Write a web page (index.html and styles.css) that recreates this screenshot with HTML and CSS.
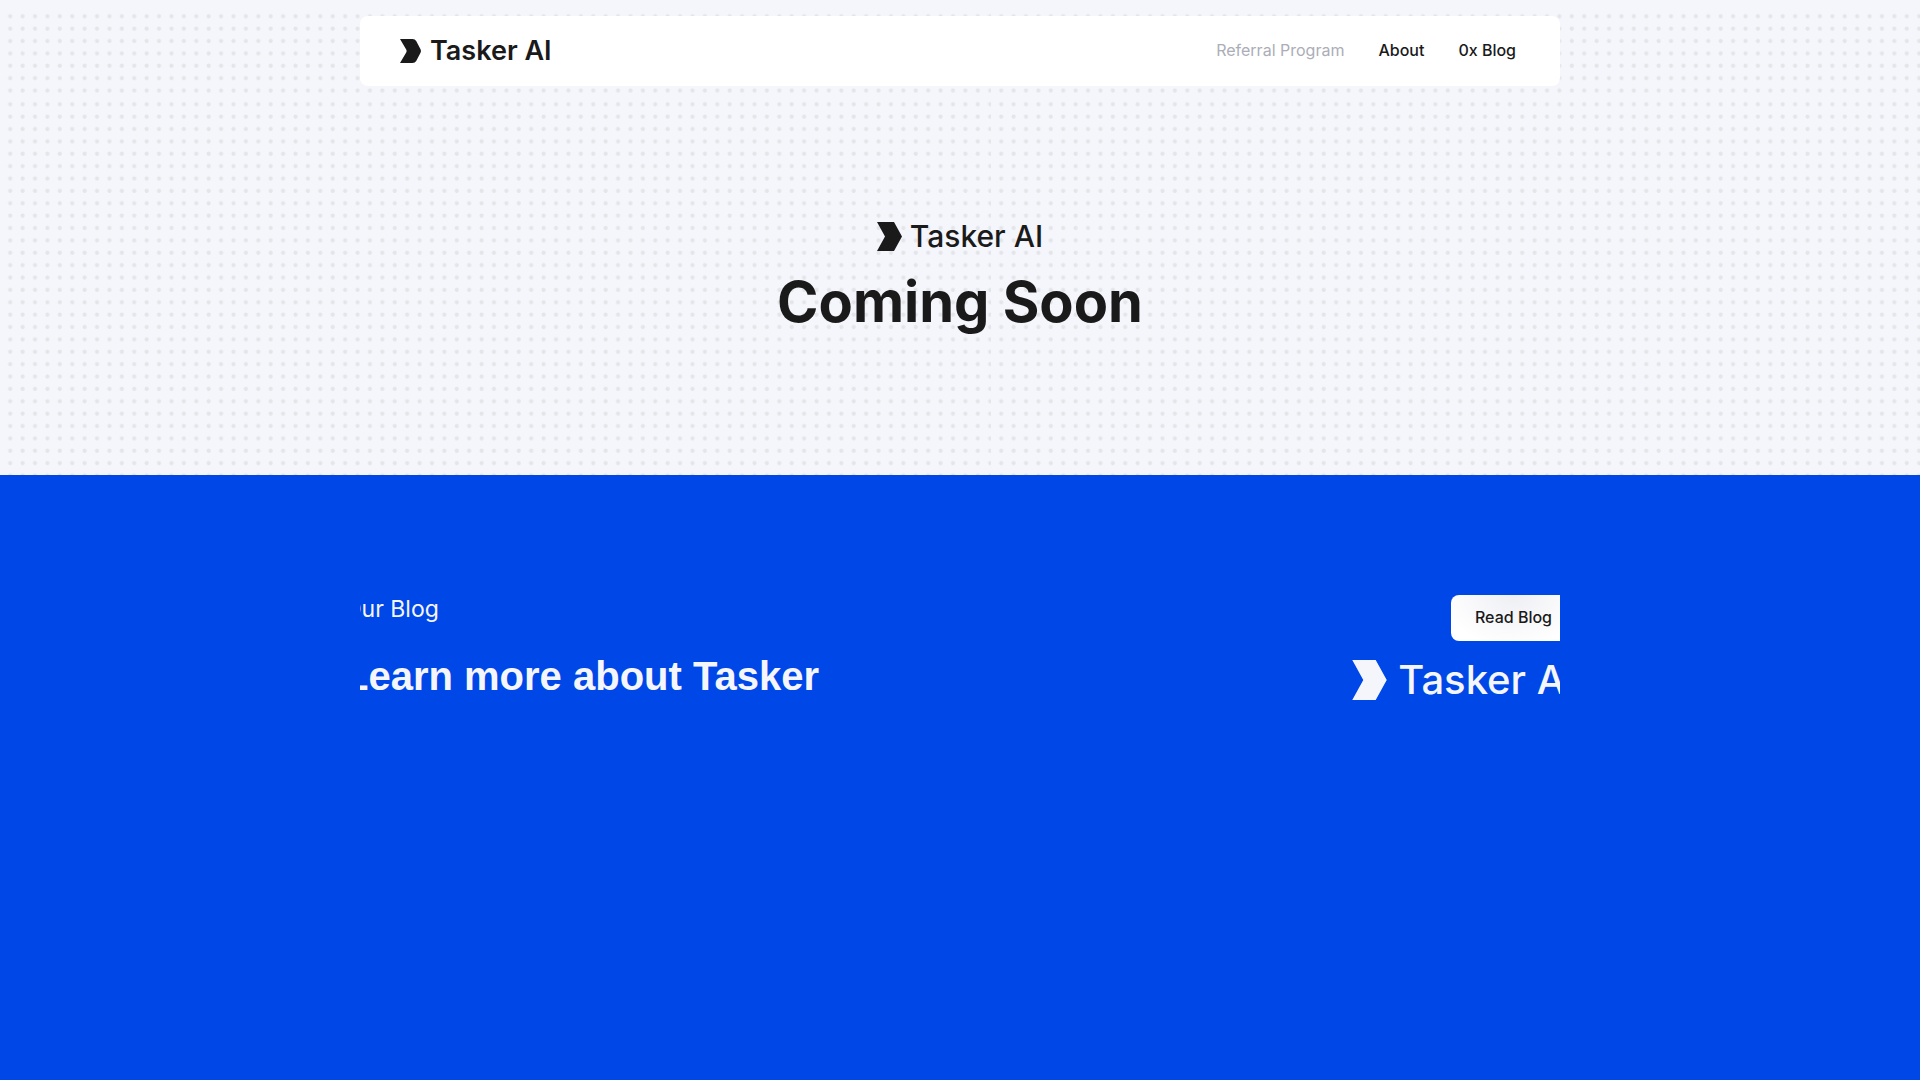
FILE: index.html
```html
<!DOCTYPE html>
<html lang="en">
<head>
<meta charset="utf-8">
<meta name="viewport" content="width=device-width, initial-scale=1">
<title>Tasker AI</title>
<link rel="stylesheet" href="styles.css">
</head>
<body>
<header class="site-header dots">
  <div class="bar">
    <a class="brand brand-bar" href="#">
      <svg class="mark" viewBox="0 0 21 24" aria-hidden="true"><path d="M0 0H12.5Q15 0 16.2 2L20.4 10Q21.5 12 20.4 14L16.2 22Q15 24 12.5 24H0L6.2 13.5Q7 12 6.2 10.500Z"/></svg>
      <span>Tasker AI</span>
    </a>
    <nav class="links">
      <a class="muted" href="#">Referral Program</a>
      <a href="#">About</a>
      <a href="#">0x Blog</a>
    </nav>
  </div>
</header>
<main>
  <section class="hero dots">
    <div class="brand brand-hero">
      <svg class="mark" viewBox="0 0 25 29" aria-hidden="true"><path d="M0 0H17L25 14.500L17 29H0L8 14.500Z"/></svg>
      <span>Tasker AI</span>
    </div>
    <h1>Coming Soon</h1>
  </section>
  <section class="blog">
    <div class="clip">
      <div class="row">
        <div class="copy">
          <p>Our Blog</p>
          <h2>Learn more about Tasker</h2>
        </div>
        <div class="side">
          <button class="read" type="button">Read Blog</button>
          <div class="brand brand-blog">
            <svg class="mark" viewBox="0 0 25 29" aria-hidden="true"><path d="M0 0H17L25 14.500L17 29H0L8 14.500Z"/></svg>
            <span>Tasker AI</span>
          </div>
        </div>
      </div>
    </div>
  </section>
</main>
</body>
</html>
```
FILE: styles.css
```css
* { box-sizing: border-box; }
body {
  margin: 0;
  min-height: 100vh;
  display: flex;
  flex-direction: column;
  background: #f5f6fb;
  color: #1a1a1b;
  font-family: Inter, "Liberation Sans", sans-serif;
}
h1, h2, p { margin: 0; }
a { color: inherit; text-decoration: none; }
main { flex: 1; display: flex; flex-direction: column; }

.dots {
  background-image: url("data:image/svg+xml,%3Csvg xmlns='http://www.w3.org/2000/svg' width='991' height='594'%3E%3Cdefs%3E%3Cpattern id='d' width='12.405' height='12.375' patternUnits='userSpaceOnUse'%3E%3Ccircle cx='10.2' cy='10.3' r='2.1' fill='%23e4e5e9'/%3E%3C/pattern%3E%3C/defs%3E%3Crect width='991' height='594' fill='url(%23d)'/%3E%3C/svg%3E");
  background-repeat: repeat-x;
}

.site-header { padding: 16px 24px 8px; background-position: 0 6px; }
.bar {
  max-width: 1200px;
  height: 70px;
  margin: 0 auto;
  padding: 0 44px 0 40px;
  display: flex;
  align-items: center;
  justify-content: space-between;
  background: #fff;
  border-radius: 8px;
}
.links { display: flex; gap: 34px; padding-bottom: 2px; font-size: 16px; font-weight: 500; line-height: 20px; }
.muted { color: #abadb8; font-weight: 400; }

.brand { display: flex; align-items: center; white-space: nowrap; }
.mark { flex: none; fill: currentColor; }
.brand-bar { gap: 9px; font-size: 27px; font-weight: 600; line-height: 36px; }
.brand-bar .mark { width: 21px; height: 24px; }
.brand-hero { gap: 8px; font-size: 30px; font-weight: 500; line-height: 40px; }
.brand-hero .mark { width: 25px; height: 29px; }
.brand-blog { gap: 11px; font-size: 40px; font-weight: 500; line-height: 54px; }
.brand-blog .mark { width: 35px; height: 40px; }

.hero {
  min-height: 381px;
  padding-top: 122px;
  display: flex;
  flex-direction: column;
  align-items: center;
}
.hero h1 { margin-top: 10px; font-size: 56px; font-weight: 700; line-height: 72px; }

.blog { flex: 1; padding-top: 120px; background: #0047e8; color: #f5f6fb; }
.clip { max-width: 1200px; margin: 0 auto; overflow: hidden; }
.row { display: flex; justify-content: space-between; margin: 0 -16px; }
.copy p { font-size: 23px; line-height: 28px; }
.copy h2 { margin-top: 30px; font: 700 40px/46px "Liberation Sans", sans-serif; white-space: nowrap; }
.side { display: flex; flex-direction: column; align-items: flex-end; gap: 12px; }
.read {
  height: 46px;
  padding: 0 24px 2px;
  border: 0;
  border-radius: 8px;
  background: radial-gradient(ellipse at 50% 0, #eeeff4, #fff 80%);
  color: #1a1a1b;
  font: 500 16px/20px Inter, sans-serif;
}
```
